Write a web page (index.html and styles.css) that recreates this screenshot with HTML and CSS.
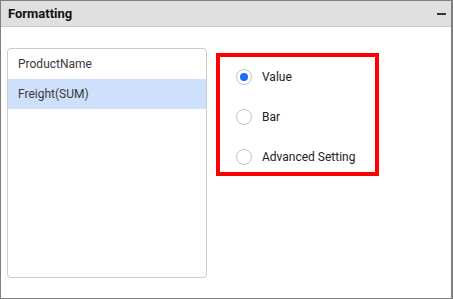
FILE: index.html
```html
<!DOCTYPE html>
<html lang="en">
<head>
    <meta charset="UTF-8">
    <meta name="viewport" content="width=device-width, initial-scale=1.0">
    <title>Formatting</title>
    <link rel="stylesheet" href="styles.css">
</head>
<body>
    <div class="panel">
        <div class="panel-header">
            <span class="panel-title">Formatting</span>
            <span class="collapse"></span>
        </div>

        <div class="panel-body">
            <ul class="field-list">
                <li class="field">ProductName</li>
                <li class="field selected">Freight(SUM)</li>
            </ul>

            <div class="options">
                <label class="option">
                    <span class="radio checked"></span>
                    <span>Value</span>
                </label>
                <label class="option">
                    <span class="radio"></span>
                    <span>Bar</span>
                </label>
                <label class="option">
                    <span class="radio"></span>
                    <span>Advanced Setting</span>
                </label>
            </div>
        </div>
    </div>
</body>
</html>
```

FILE: styles.css
```css
*{
    box-sizing: border-box;
}

body{
    margin: 0;
    font-family: Roboto, "Liberation Sans", sans-serif;
    font-size: 12px;
    color: #333;
    background-color: #fff;
}

.panel{
    width: 453px;
    height: 299px;
    border: 1px solid #808080;
    border-right-width: 2px;
}

.panel-header{
    height: 26px;
    background-color: #e0e0e0;
    border-bottom: 1px solid #cccccc;

    display: flex;
    align-items: center;
    justify-content: space-between;

    padding: 0 4px 0 7px;
}

.panel-title{
    font-size: 13px;
    font-weight: bold;
    color: #111;
}

.collapse{
    width: 9px;
    height: 2px;
    background-color: #333;
    margin-right: 1px;
}

.panel-body{
    display: flex;
    align-items: flex-start;
    gap: 9px;
    padding: 21px 0 0 6px;
}

.field-list{
    list-style: none;
    margin: 0;
    padding: 0;

    width: 200px;
    height: 230px;
    border: 1px solid #cccccc;
    border-radius: 4px;
}

.field{
    height: 30px;
    line-height: 30px;
    padding-left: 10px;
    color: #3a3a3a;
}

.field.selected{
    background-color: #cfe0fc;
}

.options{
    margin-top: 5px;
    width: 163px;
    height: 123px;
    border: 4px solid #ff0000;

    display: flex;
    flex-direction: column;
    gap: 24px;
    padding: 12px 0 0 16px;
}

.option{
    display: flex;
    align-items: center;
    gap: 10px;
    height: 16px;
    color: #222;
}

.radio{
    width: 16px;
    height: 16px;
    border: 1px solid #c4c4c4;
    border-radius: 50%;

    display: flex;
    align-items: center;
    justify-content: center;
}

.radio.checked::after{
    content: "";
    width: 8px;
    height: 8px;
    border-radius: 50%;
    background-color: #1e6ef5;
}
```
